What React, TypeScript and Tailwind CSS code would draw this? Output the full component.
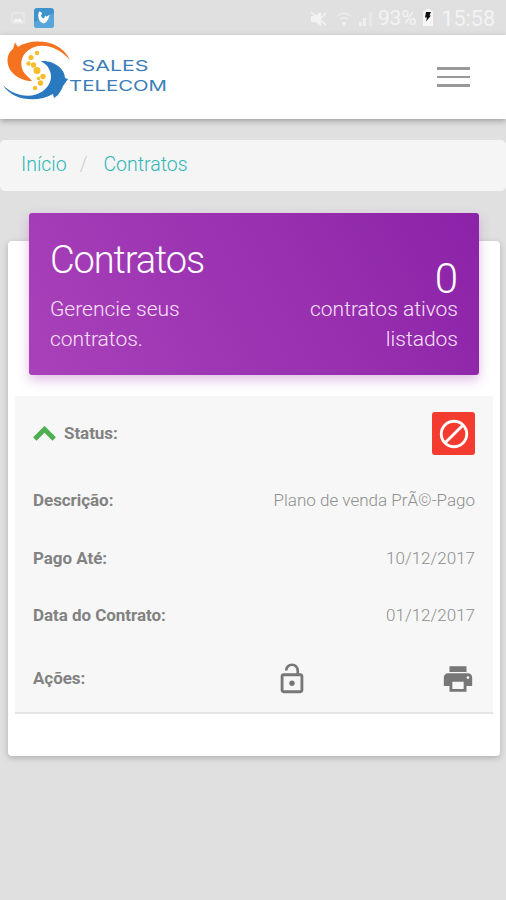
import React, { type ReactNode } from 'react';
import { MdPrint } from 'react-icons/md';

interface RowProps {
  label: ReactNode;
  className: string;
  children: ReactNode;
}

function StatusBar() {
  return (
    <div className="h-[35px] bg-[#e0e0e0] flex items-center justify-between pl-[11px] pr-[11px] text-[#f3f3f3]">
      <div className="flex items-center gap-[9px]">
        <svg width="14" height="12" viewBox="0 0 14 12">
          <rect x="1" y="1" width="12" height="10" rx="1" fill="none" stroke="#e9e9e9" strokeWidth="1.500" />
          <path d="M2 10l3-4 2 2 2-2 3 4z" fill="#f5f5f5" />
        </svg>
        <svg width="20" height="20" viewBox="0 0 20 20">
          <rect width="20" height="20" rx="3" fill="#3f93cd" />
          <path d="M0 14l20-9v12q0 3-3 3H3q-3 0-3-3z" fill="#57a5da" />
          <path d="M5 3.500q3 0 3 2.500L6.800 7.500q.7 2.500 3.200 3l1.200-3 1.300 1.200 3-2-1 3.800q-1.500 4-5 5-3.500-1-4.800-4.500-1.200-4 .3-7.500z" fill="#fff" />
        </svg>
      </div>
      <div className="flex items-center pt-[2px]">
        <svg width="18" height="16" viewBox="0 0 18 16" fill="#f3f3f3">
          <path d="M1 5h4l6-4v14l-6-4H1z" />
          <path d="M1 1l15 13M16 2L8 10" stroke="#f3f3f3" strokeWidth="1.500" />
        </svg>
        <svg className="ml-[8px]" width="16" height="16" viewBox="0 0 16 16" fill="none" stroke="#ededed" strokeWidth="1.600">
          <path d="M1 5q7-6 14 0M4 8.500q4-3.500 8 0" />
          <path d="M8 15l-2.500-4h5z" fill="#f3f3f3" stroke="none" />
        </svg>
        <svg className="ml-[7px]" width="14" height="15" viewBox="0 0 14 15" fill="#f0f0f0">
          <rect x="0" y="11" width="3" height="4" />
          <rect x="4" y="7" width="3" height="8" />
          <rect x="10" y="1" width="3" height="14" fill="#e8e8e8" />
        </svg>
        <span className="ml-[5px] w-[43px] font-['Roboto'] text-[21px] leading-none tracking-[-0.2px] whitespace-nowrap">93%</span>
        <svg className="ml-[1px] -mt-[2px]" width="12" height="17" viewBox="0 0 12 17">
          <path d="M3.500 2V0h5v2H11v15H1V2z" fill="#f7f7f7" />
          <path d="M4 3h5L7.500 6.500H9L4 12.500l1-4H3z" fill="#111" />
        </svg>
        <span className="ml-[7px] font-['Roboto'] text-[21.500px] leading-none w-[54px] text-right whitespace-nowrap">15:58</span>
      </div>
    </div>
  );
}

function Logo() {
  return (
    <svg width="168" height="68" viewBox="0 0 168 68" className="block">
      {/* orange arm */}
      <path d="M15 7.500L18 12C32 3 60 4 70 25 60 13 44 7 32 13 22 18 19 27 23 36 25 40 30 43 32 46 20 46 8 38 7.500 26 7.500 20 10 16 13 14z" fill="#f5731f" />
      {/* blue arm */}
      <path d="M3 50C12 60 31 65 43 56 51 50 53 41 49 34 47 29 43 28 41 26 54 25 65 34 65 43L68 44 63 51C62 55 59 58 58 60L54 63 53 59C38 68 12 66 3 50z" fill="#2a78be" />
      <g fill="#f9bc2b">
        <circle cx="37" cy="18" r="2.200" />
        <circle cx="31" cy="22.500" r="2.600" />
        <circle cx="28.500" cy="28.500" r="2.200" />
        <circle cx="33.500" cy="30" r="2.700" />
        <circle cx="37" cy="35.500" r="3.500" />
        <circle cx="43" cy="41.500" r="2.700" />
        <circle cx="38.500" cy="43.500" r="1.800" />
        <circle cx="40.500" cy="48" r="2.700" />
        <circle cx="35" cy="53" r="2.200" />
      </g>
      <g fill="#3a7db8" fontFamily="Inter, Liberation Sans, sans-serif" fontSize="15">
        <text x="81.500" y="36" textLength="67" lengthAdjust="spacingAndGlyphs">SALES</text>
        <text x="69" y="56" textLength="98" lengthAdjust="spacingAndGlyphs">TELECOM</text>
      </g>
    </svg>
  );
}

function Header() {
  return (
    <header className="relative h-[84px] bg-white flex justify-between shadow-[0_2px_6px_rgba(0,0,0,0.3)]">
      <Logo />
      <button className="mt-[32px] mr-[36px] flex flex-col gap-[6px] w-[33px] h-[21px]">
        <span className="block w-full h-[2.500px] shrink-0 bg-[#999]" />
        <span className="block w-full h-[2.500px] shrink-0 bg-[#999]" />
        <span className="block w-full h-[2.500px] shrink-0 bg-[#999]" />
      </button>
    </header>
  );
}

function Breadcrumb() {
  return (
    <nav className="mt-[21px] h-[51px] pb-[2px] rounded-[5px] bg-[#f5f5f5] flex items-center pl-[21px] text-[19.500px] font-light text-[#2fb5b5]">
      <a>Início</a>
      <span className="ml-[13px] text-[#ccc]">/</span>
      <a className="ml-[16px]">Contratos</a>
    </nav>
  );
}

function Row({ label, className, children }: RowProps) {
  return (
    <div className={`flex items-center justify-between pl-[18px] pr-[18px] ${className}`}>
      <span className="flex items-center text-[17px] font-bold tracking-[-0.05px] text-[#828282]">{label}</span>
      {children}
    </div>
  );
}

export default function App() {
  return (
    <div className="min-h-[900px] bg-[#e0e0e0] font-['Roboto',sans-serif]">
      <StatusBar />
      <Header />
      <Breadcrumb />

      <main className="mt-[50px] mx-[8px] mr-[6px] h-[515px] rounded-[4px] bg-white shadow-[0_2px_6px_rgba(0,0,0,0.22)] flex flex-col">
        <div className="-mt-[28px] ml-[21px] mr-[21px] h-[162px] shrink-0 rounded-[3px] bg-linear-60 from-[#a941ba] to-[#8c22a8] px-[21px] flex justify-between font-light text-white shadow-[0_5px_12px_rgba(156,39,176,0.3)]">
          <div className="w-[160px] pt-[26px]">
            <h1 className="text-[38px] leading-[42px] tracking-[-1.1px]">Contratos</h1>
            <p className="mt-[13px] text-[21px] leading-[30px] text-[#f9e0fb]">Gerencie seus contratos.</p>
          </div>
          <div className="w-[160px] pt-[50px] text-right">
            <div className="text-[42px] leading-[31px]">0</div>
            <p className="text-[21px] leading-[30px] text-[#f9e0fb]">contratos ativos listados</p>
          </div>
        </div>

        <div className="mt-[21px] mx-[7px] h-[318px] bg-[#f7f7f7] border-b-2 border-[#e6e6e6] text-[17px]">
          <Row
            className="h-[75px]"
            label={
              <>
                <svg className="mr-[8px]" width="23" height="15" viewBox="0 0 23 15">
                  <path d="M1.800 13L11.500 3.300 21.200 13" fill="none" stroke="#4caf50" strokeWidth="4.800" />
                </svg>
                Status:
              </>
            }
          >
            <span className="w-[43px] h-[43px] rounded-[3px] bg-[#f33b30] flex items-center justify-center">
              <svg width="34" height="34" viewBox="0 0 24 24" fill="none" stroke="#fff" strokeWidth="2">
                <circle cx="12" cy="12" r="9" />
                <path d="M5.600 18.400L18.400 5.600" />
              </svg>
            </span>
          </Row>
          <Row className="h-[59px]" label="Descrição:">
            <span className="font-light text-[#8f8f8f]">Plano de venda PrÃ©-Pago</span>
          </Row>
          <Row className="h-[57px]" label="Pago Até:">
            <span className="font-light text-[#8f8f8f]">10/12/2017</span>
          </Row>
          <Row className="h-[58px]" label="Data do Contrato:">
            <span className="font-light text-[#8f8f8f]">01/12/2017</span>
          </Row>
          <Row className="h-[67px]" label="Ações:">
            <div className="flex gap-[132px] text-[#777]">
              <svg width="34" height="34" viewBox="0 0 24 24" fill="currentColor">
                <path d="M12 17c1.100 0 2-.9 2-2s-.9-2-2-2-2 .9-2 2 .9 2 2 2zm6-9h-1V6c0-2.760-2.240-5-5-5S7 3.240 7 6h1.900c0-1.710 1.390-3.100 3.100-3.100s3.100 1.390 3.100 3.100v2H6c-1.100 0-2 .9-2 2v10c0 1.100.9 2 2 2h12c1.100 0 2-.9 2-2V10c0-1.100-.9-2-2-2zm0 12H6V10h12v10z" />
              </svg>
              <MdPrint size={34} />
            </div>
          </Row>
        </div>
      </main>
    </div>
  );
}
